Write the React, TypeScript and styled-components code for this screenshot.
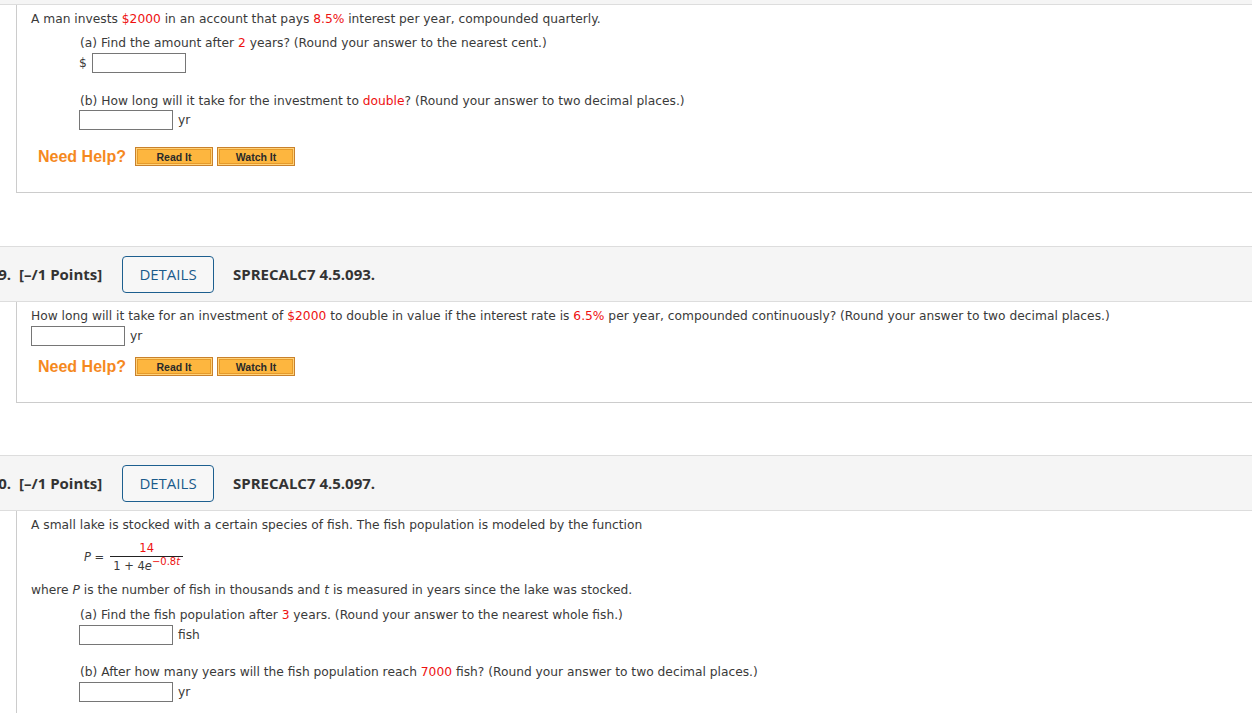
import styled, { createGlobalStyle } from 'styled-components';

const GlobalStyle = createGlobalStyle`
  html, body {
    margin: 0;
    padding: 0;
    background: #ffffff;
    overflow: hidden;
  }
  body {
    font-family: 'DejaVu Sans', Verdana, sans-serif;
    font-size: 12.25px;
    color: #3a3a3a;
  }
`;

const Page = styled.div`
  width: 1252px;
  height: 713px;
  overflow: hidden;
`;

const TopStrip = styled.div`
  height: 4px;
  background: #f5f5f5;
  border-bottom: 1px solid #dddddd;
`;

const Header = styled.div<{ $gap: number }>`
  display: flex;
  align-items: center;
  height: 54px;
  margin-top: ${(p) => p.$gap}px;
  background: #f5f5f5;
  border-top: 1px solid #dddddd;
  border-bottom: 1px solid #dddddd;
  font-family: 'Open Sans', 'Noto Sans', sans-serif;
  font-size: 15px;
  font-weight: 700;
  color: #333333;
`;

// the question number runs off the left edge of the scrolled page
const Number = styled.span`
  display: flex;
  justify-content: flex-end;
  flex: none;
  width: 11px;
  margin-right: 8px;
  white-space: nowrap;
`;

const Points = styled.span`
  width: 103px;
`;

const DetailsButton = styled.button`
  width: 92px;
  height: 37px;
  margin-right: 19px;
  border: 1px solid #1d5f8f;
  border-radius: 4px;
  background: #f7f7f7;
  color: #1b5b8b;
  font-family: 'Open Sans', 'Noto Sans', sans-serif;
  font-size: 15px;
  font-weight: 400;
  padding: 0;
`;

const Body = styled.div<{ $top: number; $bottom: number }>`
  margin-left: 16px;
  border-left: 1px solid #cccccc;
  border-bottom: 1px solid #cccccc;
  padding: ${(p) => p.$top}px 0 ${(p) => p.$bottom}px 14px;
`;

const Line = styled.div<{ $indent?: boolean; $gap?: number }>`
  line-height: 16px;
  padding-top: 1px;
  margin-bottom: -1px;
  margin-left: ${(p) => (p.$indent ? 49 : 0)}px;
  margin-top: ${(p) => p.$gap ?? 0}px;
`;

const Red = styled.span`
  color: #ee1111;
`;

const AnswerRow = styled.div<{ $indent?: boolean; $gap?: number }>`
  display: flex;
  align-items: center;
  gap: 5px;
  margin-left: ${(p) => (p.$indent ? 48 : 0)}px;
  margin-top: ${(p) => p.$gap ?? 3}px;
  height: 20px;
`;

const Input = styled.div`
  width: 92px;
  height: 18px;
  border: 1px solid #767676;
`;

const HelpRow = styled.div<{ $gap: number }>`
  display: flex;
  align-items: center;
  margin-left: 7px;
  margin-top: ${(p) => p.$gap}px;
  height: 19px;
`;

const NeedHelp = styled.span`
  font-family: 'Liberation Sans', Arial, sans-serif;
  font-weight: 700;
  font-size: 16px;
  color: #f5891f;
  margin-right: 9px;
`;

const HelpButton = styled.div`
  width: 76px;
  height: 17px;
  margin-right: 4px;
  border: 1px solid #c9812c;
  box-shadow: inset 0 0 0 1px #ffd27a, inset 0 0 0 2px #e59a2a;
  background: #fdb63f;
  display: flex;
  align-items: center;
  justify-content: center;
  font-family: 'Liberation Sans', Arial, sans-serif;
  font-weight: 700;
  font-size: 10.5px;
  color: #2a2a2a;
`;

const Formula = styled.div`
  display: flex;
  align-items: center;
  margin: 9px 0 0 53px;
  font-size: 11.5px;
`;

const Var = styled.span`
  font-style: italic;
`;

const Eq = styled.span`
  margin-right: 6px;
`;

const Fraction = styled.span`
  display: inline-flex;
  flex-direction: column;
  align-items: center;
`;

const Numerator = styled.span`
  color: #ee1111;
  line-height: 14px;
  padding: 0 2px 1px;
`;

const Denominator = styled.span`
  border-top: 1px solid #222222;
  line-height: 14px;
  padding: 2px 3px 0;
`;

const Sup = styled.sup`
  color: #ee1111;
  font-size: 10px;
  vertical-align: 5px;
  line-height: 0;
`;

const Help = () => (
  <>
    <HelpButton>Read It</HelpButton>
    <HelpButton>Watch It</HelpButton>
  </>
);

export default function App() {
  return (
    <Page>
      <GlobalStyle />
      <TopStrip />
      <Body $top={5} $bottom={26}>
        <Line>
          A man invests <Red>$2000</Red> in an account that pays <Red>8.5%</Red> interest per year, compounded quarterly.
        </Line>
        <Line $indent $gap={8}>
          (a) Find the amount after <Red>2</Red> years? (Round your answer to the nearest cent.)
        </Line>
        <AnswerRow $indent>
          $ <Input />
        </AnswerRow>
        <Line $indent $gap={19}>
          (b) How long will it take for the investment to <Red>double</Red>? (Round your answer to two decimal places.)
        </Line>
        <AnswerRow $indent $gap={2}>
          <Input /> yr
        </AnswerRow>
        <HelpRow $gap={17}>
          <NeedHelp>Need Help?</NeedHelp>
          <Help />
        </HelpRow>
      </Body>

      <Header $gap={53}>
        <Number>9.</Number>
        <Points>[–/1 Points]</Points>
        <DetailsButton>DETAILS</DetailsButton>
        SPRECALC7 4.5.093.
      </Header>
      <Body $top={5} $bottom={26}>
        <Line>
          How long will it take for an investment of <Red>$2000</Red> to double in value if the interest rate is <Red>6.5%</Red> per year, compounded continuously? (Round your answer to two decimal places.)
        </Line>
        <AnswerRow>
          <Input /> yr
        </AnswerRow>
        <HelpRow $gap={11}>
          <NeedHelp>Need Help?</NeedHelp>
          <Help />
        </HelpRow>
      </Body>

      <Header $gap={52}>
        <Number>10.</Number>
        <Points>[–/1 Points]</Points>
        <DetailsButton>DETAILS</DetailsButton>
        SPRECALC7 4.5.097.
      </Header>
      <Body $top={5} $bottom={20}>
        <Line>
          A small lake is stocked with a certain species of fish. The fish population is modeled by the function
        </Line>
        <Formula>
          <Var>P</Var>
          <Eq>&nbsp;=</Eq>
          <Fraction>
            <Numerator>14</Numerator>
            <Denominator>
              1 + 4<Var>e</Var>
              <Sup>
                −0.8<Var>t</Var>
              </Sup>
            </Denominator>
          </Fraction>
        </Formula>
        <Line $gap={8}>
          where <Var>P</Var> is the number of fish in thousands and <Var>t</Var> is measured in years since the lake was stocked.
        </Line>
        <Line $indent $gap={9}>
          (a) Find the fish population after <Red>3</Red> years. (Round your answer to the nearest whole fish.)
        </Line>
        <AnswerRow $indent>
          <Input /> fish
        </AnswerRow>
        <Line $indent $gap={18}>
          (b) After how many years will the fish population reach <Red>7000</Red> fish? (Round your answer to two decimal places.)
        </Line>
        <AnswerRow $indent>
          <Input /> yr
        </AnswerRow>
      </Body>
    </Page>
  );
}
